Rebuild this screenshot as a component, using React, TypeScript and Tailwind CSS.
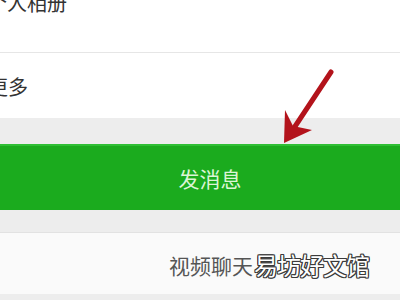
function Arrow() {
  return (
    <svg
      className="absolute left-0 top-0 pointer-events-none"
      width="400"
      height="300"
      viewBox="0 0 400 300"
    >
      <line x1="331" y1="72" x2="290" y2="134" stroke="#b3131b" strokeWidth="5" strokeLinecap="round" />
      <path d="M284 143 L285 110 L293 126 L312 130 Z" fill="#b3131b" />
    </svg>
  );
}

export default function App() {
  return (
    <div className="relative w-[400px] h-[300px] overflow-hidden bg-[#ededed] flex flex-col [font-family:'Noto_Sans_CJK_SC','Noto_Sans',sans-serif]">
      <div className="h-[53px] bg-white border-b border-[#e6e6e6] flex items-start">
        <span className="ml-[-13px] mt-[-9px] text-[20px] leading-[24px] text-[#333]">个人相册</span>
      </div>
      <div className="h-[65px] bg-white flex items-center">
        <span className="ml-[-12px] mt-[2px] text-[20px] leading-[24px] text-[#333]">更多</span>
      </div>
      <div className="h-[26px]" />
      <div className="h-[66px] bg-[#1bab1e] border-t-2 border-[#2fbf34] flex items-center justify-center">
        <span className="text-[21px] leading-[24px] text-[#dcf5d6] ml-[20px]">发消息</span>
      </div>
      <div className="h-[22px]" />
      <div className="h-[62px] bg-[#fafafa] border-t border-[#e2e2e2] flex items-center">
        <span className="ml-[169px] mt-[2px] text-[21px] leading-[24px] text-[#555]">视频聊天</span>
        <span className="ml-[1px] mt-[2px] text-[24px] leading-[28px] text-white tracking-[-1px] [text-shadow:1px_0_#3a3a3a,-1px_0_#3a3a3a,0_1px_#3a3a3a,0_-1px_#3a3a3a,1px_1px_#3a3a3a,-1px_-1px_#3a3a3a,1px_-1px_#3a3a3a,-1px_1px_#3a3a3a]">
          易坊好文馆
        </span>
      </div>
      <div className="flex-1" />
      <Arrow />
    </div>
  );
}
